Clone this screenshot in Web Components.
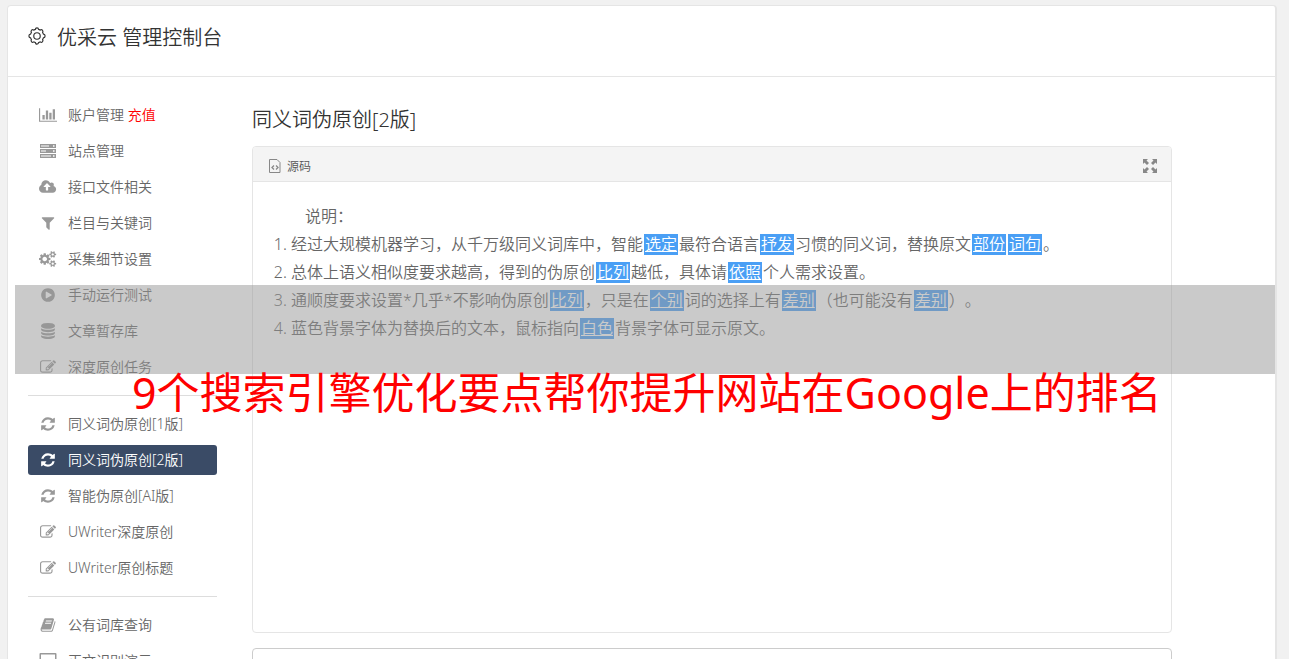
<!DOCTYPE html>
<html lang="zh-CN">
<head>
<meta charset="utf-8">
<meta name="viewport" content="width=device-width, initial-scale=1">
<title>优采云 管理控制台</title>
<style>
  html, body {
    height: 100%;
  }
  body {
    margin: 0;
    overflow: hidden;
    background: #f1f1f1;
    color: #666;
    font-family: "Noto Sans", "Noto Sans CJK SC", sans-serif;
    font-size: 14px;
    font-weight: 350;
    text-spacing-trim: space-all;
  }
  .recharge {
    color: #f00;
  }
</style>
</head>
<body>

<console-shell heading="优采云 管理控制台">
  <side-menu slot="menu">
    <menu-item icon="chart">账户管理 <span class="recharge">充值</span></menu-item>
    <menu-item icon="server">站点管理</menu-item>
    <menu-item icon="cloud">接口文件相关</menu-item>
    <menu-item icon="filter">栏目与关键词</menu-item>
    <menu-item icon="cogs">采集细节设置</menu-item>
    <menu-item icon="play">手动运行测试</menu-item>
    <menu-item icon="database">文章暂存库</menu-item>
    <menu-item icon="edit">深度原创任务</menu-item>
    <menu-divider></menu-divider>
    <menu-item icon="refresh">同义词伪原创[1版]</menu-item>
    <menu-item icon="refresh" active>同义词伪原创[2版]</menu-item>
    <menu-item icon="refresh">智能伪原创[AI版]</menu-item>
    <menu-item icon="edit">UWriter深度原创</menu-item>
    <menu-item icon="edit">UWriter原创标题</menu-item>
    <menu-divider></menu-divider>
    <menu-item icon="book">公有词库查询</menu-item>
    <menu-item icon="screen">正文识别演示</menu-item>
  </side-menu>
  <rewrite-page heading="同义词伪原创[2版]"></rewrite-page>
</console-shell>

<page-banner>9个搜索引擎优化要点帮你提升网站在Google上的排名</page-banner>

<script>
const ICONS = {
  chart: { box: '0 0 2048 1792', body: '<path d="M640 896v512h-256v-512h256zm384-512v1024h-256v-1024h256zm1024 1152v128h-2048v-1536h128v1408h1920zm-640-896v768h-256v-768h256zm384-384v1152h-256v-1152h256z"/>' },
  server: { box: '0 0 18 16', body: '<path fill-rule="evenodd" d="M1 1h16v4H1zM2 2.500h8v1H2zM14 2.200h1.500v1.500H14zM1 6h16v4H1zM2 7.500h5v1H2zM14 7.200h1.500v1.500H14zM1 11h16v4H1zM2 12.500h10v1H2zM14 12.200h1.500v1.500H14z"/>' },
  cloud: { box: '0 0 1920 1792', body: '<path d="M1280 864q0-14-9-23l-352-352q-9-9-23-9t-23 9l-351 351q-10 12-10 24 0 14 9 23t23 9h224v352q0 13 9.500 22.500t22.500 9.500h192q13 0 22.500-9.500t9.500-22.500v-352h224q13 0 22.500-9.500t9.500-22.500zm640 288q0 159-112.500 271.500t-271.500 112.500h-1088q-185 0-316.500-131.500t-131.500-316.500q0-130 70-240t188-165q-2-30-2-43 0-212 150-362t362-150q156 0 285.500 87t188.500 231q71-62 166-62 106 0 181 75t75 181q0 76-41 138 130 31 213.500 135.500t83.500 238.500z"/>' },
  filter: { box: '0 0 1792 1792', body: '<path d="M1595 295q17 41-14 70l-493 493v742q0 42-39 59-13 5-25 5-27 0-45-19l-256-256q-19-19-19-45v-486l-493-493q-31-29-14-70 17-39 59-39h1280q42 0 59 39z"/>' },
  cogs: { box: '0 0 1920 1792', body: '<path d="M896 896q0-106-75-181t-181-75-181 75-75 181 75 181 181 75 181-75 75-181zm768 512q0-52-38-90t-90-38-90 38-38 90q0 53 37.500 90.500t90.500 37.500 90.500-37.500 37.500-90.500zm0-1024q0-52-38-90t-90-38-90 38-38 90q0 53 37.500 90.500t90.500 37.500 90.500-37.500 37.500-90.500zm-384 421v185q0 10-7 19.500t-16 10.500l-155 24q-11 35-32 76 34 48 90 115 7 11 7 20 0 12-7 19-23 30-82.500 89.500t-78.500 59.500q-11 0-21-7l-115-90q-37 19-77 31-11 108-23 155-7 24-30 24h-186q-11 0-20-7.500t-10-17.500l-23-153q-34-10-75-31l-118 89q-7 7-20 7-11 0-21-8-144-133-144-160 0-9 7-19 10-14 41-53t47-61q-23-44-35-82l-152-24q-10-1-17-9.500t-7-19.500v-185q0-10 7-19.500t16-10.500l155-24q11-35 32-76-34-48-90-115-7-11-7-20 0-12 7-20 22-30 82-89t79-59q11 0 21 7l115 90q34-18 77-32 11-108 23-154 7-24 30-24h186q11 0 20 7.500t10 17.500l23 153q34 10 75 31l118-89q8-7 20-7 11 0 21 8 144 133 144 160 0 8-7 19-12 16-42 54t-45 60q23 48 34 82l152 23q10 2 17 10.500t7 19.500zm640 533v140q0 16-149 31-12 27-30 52 51 113 51 138 0 4-4 7-122 71-124 71-8 0-46-47t-52-68q-20 2-30 2t-30-2q-14 21-52 68t-46 47q-2 0-124-71-4-3-4-7 0-25 51-138-18-25-30-52-149-15-149-31v-140q0-16 149-31 13-29 30-52-51-113-51-138 0-4 4-7 4-2 35-20t59-34 30-16q8 0 46 46.500t52 67.500q20-2 30-2t30 2q51-71 92-112l6-2q4 0 124 70 4 3 4 7 0 25-51 138 17 23 30 52 149 15 149 31zm0-1024v140q0 16-149 31-12 27-30 52 51 113 51 138 0 4-4 7-122 71-124 71-8 0-46-47t-52-68q-20 2-30 2t-30-2q-14 21-52 68t-46 47q-2 0-124-71-4-3-4-7 0-25 51-138-18-25-30-52-149-15-149-31v-140q0-16 149-31 13-29 30-52-51-113-51-138 0-4 4-7 4-2 35-20t59-34 30-16q8 0 46 46.500t52 67.500q20-2 30-2t30 2q51-71 92-112l6-2q4 0 124 70 4 3 4 7 0 25-51 138 17 23 30 52 149 15 149 31z"/>' },
  play: { box: '0 0 1792 1792', body: '<path d="M896 128q209 0 385.500 103t279.500 279.500 103 385.500-103 385.500-279.500 279.500-385.500 103-385.500-103-279.500-279.500-103-385.500 103-385.500 279.500-279.500 385.500-103zm384 823q32-18 32-55t-32-55l-544-320q-31-19-64-1-32 19-32 56v640q0 37 32 56 16 8 32 8 17 0 32-9z"/>' },
  database: { box: '0 0 1792 1792', body: '<path d="M896 768q237 0 443-43t325-127v170q0 69-103 128t-280 93.500-385 34.500-385-34.500-280-93.500-103-128v-170q119 84 325 127t443 43zm0 768q237 0 443-43t325-127v170q0 69-103 128t-280 93.500-385 34.500-385-34.500-280-93.500-103-128v-170q119 84 325 127t443 43zm0-384q237 0 443-43t325-127v170q0 69-103 128t-280 93.500-385 34.500-385-34.500-280-93.500-103-128v-170q119 84 325 127t443 43zm0-1152q208 0 385 34.500t280 93.500 103 128v128q0 69-103 128t-280 93.500-385 34.500-385-34.500-280-93.500-103-128v-128q0-69 103-128t280-93.500 385-34.500z"/>' },
  edit: { box: '0 0 1792 1792', body: '<path d="M888 1184l116-116-152-152-116 116v56h96v96h56zm440-720q-16-16-33 1l-350 350q-17 17-1 33t33-1l350-350q17-17 1-33zm80 594v190q0 119-84.500 203.500t-203.500 84.500h-832q-119 0-203.500-84.500t-84.500-203.500v-832q0-119 84.500-203.500t203.500-84.500h832q63 0 117 25 15 7 18 23 3 17-9 29l-49 49q-14 14-32 8-23-6-45-6h-832q-66 0-113 47t-47 113v832q0 66 47 113t113 47h832q66 0 113-47t47-113v-126q0-13 9-22l64-64q15-15 35-7t20 29zm-96-738l288 288-672 672h-288v-288zm444 132l-92 92-288-288 92-92q28-28 68-28t68 28l152 152q28 28 28 68t-28 68z"/>' },
  refresh: { box: '0 0 1792 1792', body: '<path d="M1639 1056q0 5-1 7-64 268-268 434.500t-478 166.500q-146 0-282.500-55t-243.500-157l-129 129q-19 19-45 19t-45-19-19-45v-448q0-26 19-45t45-19h448q26 0 45 19t19 45-19 45l-137 137q71 66 161 102t187 36q134 0 250-65t186-179q11-17 53-117 8-23 30-23h192q13 0 22.500 9.500t9.500 22.500zm25-800v448q0 26-19 45t-45 19h-448q-26 0-45-19t-19-45 19-45l138-138q-148-137-349-137-134 0-250 65t-186 179q-11 17-53 117-8 23-30 23h-199q-13 0-22.500-9.500t-9.500-22.500v-7q65-268 270-434.500t480-166.500q146 0 284 55.500t245 156.500l130-129q19-19 45-19t45 19 19 45z"/>' },
  book: { box: '0 0 1792 1792', body: '<path d="M1703 478q40 57 18 129l-275 906q-19 64-76.500 107.500t-122.500 43.500h-923q-77 0-148.500-53.500t-99.500-131.500q-24-67-2-127 0-4 3-27t4-37q1-8-3-21.500t-3-19.500q2-11 8-21t16.500-23.500 16.500-23.500q23-38 45-91.500t30-91.500q3-10 .5-30t-.5-28q3-11 17-28t17-23q21-36 42-92t25-90q1-9-2.500-32t.5-28q4-13 22-30.500t22-22.500q19-26 42.500-84.500t27.500-96.500q1-8-3-25.500t-2-26.500q2-8 9-18t18-23 17-21q8-12 16.500-30.500t15-35 16-36 19.500-32 26.500-23.500 36-11.500 47.500 5.500l-1 3q38-9 51-9h761q74 0 114 56t18 130l-274 906q-36 119-71.500 153.500t-128.500 34.500h-869q-27 0-38 15-11 16-1 43 24 70 144 70h923q29 0 56-15.500t35-41.500l300-987q7-22 5-57 38 15 59 43zm-1064 2q-4 13 2 22.500t20 9.500h608q13 0 25.500-9.500t16.500-22.500l21-64q4-13-2-22.500t-20-9.500h-608q-13 0-25.500 9.500t-16.500 22.500zm-83 256q-4 13 2 22.500t20 9.500h608q13 0 25.500-9.500t16.500-22.500l21-64q4-13-2-22.500t-20-9.500h-608q-13 0-25.500 9.500t-16.500 22.500z"/>' },
  screen: { box: '0 0 18 16', body: '<path fill-rule="evenodd" d="M1.500 0h15q1 0 1 1v11q0 1-1 1H11v1.500h2V16H5v-1.500h2V13H1.500q-1 0-1-1V1q0-1 1-1zM2 1.500v10h14v-10z"/>' },
  gear: { box: '0 0 20 20', body: '<g fill="none" stroke="currentColor" stroke-width="1.300" stroke-linejoin="round"><path d="M8.300 2.700Q8.300 1 10 1t1.700 1.700q1 .3 1.900.8 1.300-1.100 2.400 0t.2 2.500q.6.900.9 2Q19 8.200 19 10t-1.900 2q-.3 1.100-.9 2 1 1.400-.2 2.500t-2.400 0q-.9.500-1.900.8Q11.700 19 10 19t-1.700-1.700q-1-.3-1.900-.8-1.300 1.100-2.400 0t-.2-2.500q-.6-.9-.9-2Q1 11.800 1 10t1.900-2q.3-1.100.9-2-1-1.400.2-2.500t2.400 0q.9-.5 1.900-.8z"/><circle cx="10" cy="10" r="3.600"/></g>' },
  source: { box: '0 0 12 14', body: '<g fill="none" stroke="currentColor"><path d="M.5.5h7.500l3 3v10H.5z"/><path d="M5 6.500l-2 2 2 2M7 6.500l2 2-2 2" stroke-width="1.300"/></g>' },
  expand: { box: '0 0 14 14', body: '<path d="M0 0h5L3.500 1.500 6 4 4 6 1.500 3.500 0 5zM14 0v5l-1.500-1.500L10 6 8 4l2.500-2.500L9 0zM0 14V9l1.500 1.500L4 8l2 2-2.500 2.500L5 14zM14 14H9l1.500-1.500L8 10l2-2 2.500 2.500L14 9z"/>' }
};

class UiIcon extends HTMLElement {
  connectedCallback() {
    const icon = ICONS[this.getAttribute('name')];
    this.attachShadow({ mode: 'open' });
    this.shadowRoot.innerHTML = `
      <style>
        :host {
          display: inline-flex;
          flex: none;
          justify-content: center;
          height: 16px;
        }
        svg {
          display: block;
          height: 100%;
          fill: currentColor;
        }
      </style>
      <svg viewBox="${icon.box}" aria-hidden="true">${icon.body}</svg>
    `;
  }
}

class MenuItem extends HTMLElement {
  connectedCallback() {
    this.attachShadow({ mode: 'open' });
    this.shadowRoot.innerHTML = `
      <style>
        :host {
          display: block;
        }
        a {
          display: flex;
          align-items: center;
          gap: 10px;
          height: 30px;
          padding: 0 10px;
          border-radius: 3px;
          color: #666;
          line-height: 30px;
          text-decoration: none;
          white-space: nowrap;
        }
        ui-icon {
          width: 20px;
          color: #999;
        }
        :host([active]) a {
          background: #3a4b66;
          color: #fff;
        }
        :host([active]) ui-icon {
          color: #fff;
        }
      </style>
      <a href="#"><ui-icon name="${this.getAttribute('icon')}"></ui-icon><span><slot></slot></span></a>
    `;
  }
}

class MenuDivider extends HTMLElement {
  connectedCallback() {
    this.attachShadow({ mode: 'open' });
    this.shadowRoot.innerHTML = `
      <style>
        :host {
          display: block;
          padding: 7px 0;
        }
        hr {
          margin: 0;
          border: 0;
          border-top: 1px solid #ddd;
        }
      </style>
      <hr>
    `;
  }
}

class SideMenu extends HTMLElement {
  connectedCallback() {
    this.attachShadow({ mode: 'open' });
    this.shadowRoot.innerHTML = `
      <style>
        :host {
          display: block;
        }
        nav {
          display: flex;
          flex-direction: column;
          gap: 6px;
        }
      </style>
      <nav><slot></slot></nav>
    `;
  }
}

class ConsoleShell extends HTMLElement {
  connectedCallback() {
    this.attachShadow({ mode: 'open' });
    this.shadowRoot.innerHTML = `
      <style>
        :host {
          display: block;
          box-sizing: border-box;
          padding: 5px 12px 0 7px;
        }
        .panel {
          border: 1px solid #e5e5e5;
          border-right-width: 2px;
          border-radius: 4px;
          background: #fff;
        }
        header {
          display: flex;
          align-items: center;
          gap: 11px;
          padding: 16px 20px 23px;
          border-bottom: 1px solid #e5e5e5;
          color: #333;
        }
        header ui-icon {
          width: 18px;
          height: 18px;
          padding-bottom: 4px;
        }
        h1 {
          margin: 0;
          font-size: 20px;
          font-weight: inherit;
          line-height: 31px;
        }
        .columns {
          display: grid;
          grid-template-columns: 189px minmax(0, 1fr);
          gap: 35px;
          padding: 23px 103px 24px 20px;
        }
      </style>
      <div class="panel">
        <header>
          <ui-icon name="gear"></ui-icon>
          <h1>${this.getAttribute('heading')}</h1>
        </header>
        <div class="columns">
          <slot name="menu"></slot>
          <slot></slot>
        </div>
      </div>
    `;
  }
}

// a replaced word
class SwapWord extends HTMLElement {
  connectedCallback() {
    this.attachShadow({ mode: 'open' });
    this.shadowRoot.innerHTML = `
      <style>
        :host {
          display: inline-block;
          margin: 0 1px;
          padding: 0 1px;
          background: #4a9ff5;
          color: #fff;
          line-height: 21px;
          text-decoration: underline;
        }
      </style>
      <slot></slot>
    `;
  }
}

class SourceEditor extends HTMLElement {
  connectedCallback() {
    this.attachShadow({ mode: 'open' });
    this.shadowRoot.innerHTML = `
      <style>
        :host {
          display: block;
          border: 1px solid #e5e5e5;
          border-radius: 4px;
        }
        .toolbar {
          display: flex;
          align-items: center;
          justify-content: space-between;
          box-sizing: border-box;
          height: 35px;
          padding: 3px 14px 0 16px;
          border-bottom: 1px solid #e5e5e5;
          border-radius: 3px 3px 0 0;
          background: #f4f4f4;
        }
        button {
          display: flex;
          align-items: center;
          gap: 6px;
          padding: 0;
          border: 0;
          background: none;
          color: #555;
          font: inherit;
          font-size: 12px;
        }
        ui-icon {
          height: 14px;
          color: #888;
        }
        .content {
          min-height: 410px;
          padding: 20px;
          font-size: 16px;
          line-height: 28px;
        }
      </style>
      <div class="toolbar">
        <button type="button"><ui-icon name="source"></ui-icon>源码</button>
        <button type="button" aria-label="全屏"><ui-icon name="expand"></ui-icon></button>
      </div>
      <div class="content"><slot></slot></div>
    `;
  }
}

class RewritePage extends HTMLElement {
  connectedCallback() {
    this.attachShadow({ mode: 'open' });
    this.shadowRoot.innerHTML = `
      <style>
        :host {
          display: flex;
          flex-direction: column;
        }
        h2 {
          margin: 0;
          padding: 3px 0 9px;
          color: #333;
          font-size: 20px;
          font-weight: inherit;
          line-height: 34px;
        }
        p {
          margin: 0;
          text-indent: 32px;
        }
        ol {
          margin: 0;
          padding-left: 18px;
        }
        textarea {
          box-sizing: border-box;
          width: 100%;
          height: 120px;
          margin-top: 15px;
          padding: 10px;
          border: 1px solid #ccc;
          border-radius: 4px;
          font: inherit;
          resize: none;
        }
      </style>
      <h2>${this.getAttribute('heading')}</h2>
      <source-editor>
        <p>说明：</p>
        <ol>
          <li>经过大规模机器学习，从千万级同义词库中，智能<swap-word>选定</swap-word>最符合语言<swap-word>抒发</swap-word>习惯的同义词，替换原文<swap-word>部份</swap-word><swap-word>词句</swap-word>。</li>
          <li>总体上语义相似度要求越高，得到的伪原创<swap-word>比列</swap-word>越低，具体请<swap-word>依照</swap-word>个人需求设置。</li>
          <li>通顺度要求设置*几乎*不影响伪原创<swap-word>比列</swap-word>，只是在<swap-word>个别</swap-word>词的选择上有<swap-word>差别</swap-word>（也可能没有<swap-word>差别</swap-word>）。</li>
          <li>蓝色背景字体为替换后的文本，鼠标指向<swap-word>白色</swap-word>背景字体可显示原文。</li>
        </ol>
      </source-editor>
      <textarea aria-label="结果"></textarea>
    `;
  }
}

// translucent strip over the page with the caption hanging below it
class PageBanner extends HTMLElement {
  connectedCallback() {
    this.attachShadow({ mode: 'open' });
    this.shadowRoot.innerHTML = `
      <style>
        :host {
          position: absolute;
          top: 285px;
          left: 15px;
          right: 14px;
          pointer-events: none;
        }
        .strip {
          height: 89px;
          background: rgba(150, 150, 150, .5);
        }
        .caption {
          margin-top: -11px;
          color: #f00;
          font-size: 43px;
          font-weight: 400;
          line-height: 60px;
          padding-left: 117px;
          white-space: nowrap;
        }
      </style>
      <div class="strip"></div>
      <div class="caption"><slot></slot></div>
    `;
  }
}

customElements.define('ui-icon', UiIcon);
customElements.define('menu-item', MenuItem);
customElements.define('menu-divider', MenuDivider);
customElements.define('side-menu', SideMenu);
customElements.define('console-shell', ConsoleShell);
customElements.define('swap-word', SwapWord);
customElements.define('source-editor', SourceEditor);
customElements.define('rewrite-page', RewritePage);
customElements.define('page-banner', PageBanner);
</script>
</body>
</html>
